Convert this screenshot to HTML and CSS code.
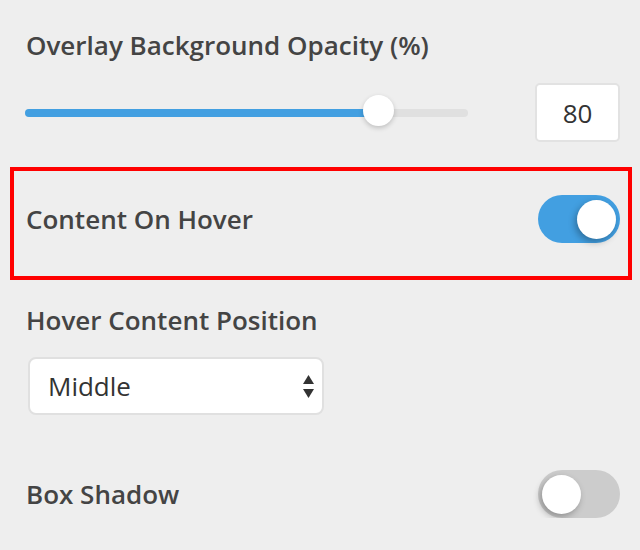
FILE: index.html
```html
<!DOCTYPE html>
<html lang="en">
<head>
    <meta charset="UTF-8">
    <meta name="viewport" content="width=device-width, initial-scale=1.0">
    <title>Overlay Settings</title>
    <link rel="stylesheet" href="styles.css">
</head>
<body>

    <!-- Opacity slider -->
    <div class="field">
        <div class="label">Overlay Background Opacity (%)</div>
        <div class="slider-row">
            <div class="track">
                <div class="fill" style="width: 80%;"></div>
                <div class="thumb"></div>
            </div>
            <input class="number" type="text" value="80">
        </div>
    </div>

    <!-- Content on hover (highlighted) -->
    <div class="highlight">
        <div class="toggle-row">
            <div class="label">Content On Hover</div>
            <div class="toggle on"><span class="knob"></span></div>
        </div>
    </div>

    <!-- Hover position -->
    <div class="field field-select">
        <div class="label">Hover Content Position</div>
        <div class="select">
            <span>Middle</span>
            <svg width="11" height="23" viewBox="0 0 11 23">
                <polygon points="0,9 5.5,0 11,9" fill="#333"/>
                <polygon points="0,14 11,14 5.5,23" fill="#333"/>
            </svg>
        </div>
    </div>

    <!-- Box shadow -->
    <div class="field field-shadow">
        <div class="toggle-row">
            <div class="label">Box Shadow</div>
            <div class="toggle"><span class="knob"></span></div>
        </div>
    </div>

</body>
</html>
```

FILE: styles.css
```css
body {
    margin: 0;
    padding-top: 27px;
    background-color: #eeeeee;
    font-family: "Open Sans", "DejaVu Sans", sans-serif;
    color: #444;
}

.field {
    padding: 0 20px 0 26px;
}

.label {
    font-size: 26px;
    font-weight: 600;
    line-height: 36px;
}

/* slider */
.slider-row {
    display: flex;
    align-items: center;
    justify-content: space-between;
    height: 59px;
    margin-top: 20px;
    margin-left: -1px;
}

.track {
    display: flex;
    align-items: center;
    width: 443px;
    height: 8px;
    border-radius: 4px;
    background: #e0e0e0;
}

.fill {
    height: 8px;
    border-radius: 4px;
    background: #429fe1;
}

.thumb {
    flex-shrink: 0;
    width: 31px;
    height: 31px;
    margin-left: -16px;
    margin-bottom: 5px;
    border-radius: 50%;
    background: white;
    box-shadow: 0px 2px 5px rgba(0, 0, 0, 0.2);
}

.number {
    box-sizing: border-box;
    width: 85px;
    height: 59px;
    margin: 0;
    padding: 0;
    border: 2px solid #e2e2e2;
    border-radius: 5px;
    background: white;
    font-family: "Open Sans", sans-serif;
    font-size: 26px;
    color: #333;
    text-align: center;
}

/* highlighted row */
.highlight {
    margin: 25px 8px 0 10px;
    padding: 24px 8px 33px 12px;
    border: 4px solid #ff0000;
}

.toggle-row {
    display: flex;
    align-items: center;
    justify-content: space-between;
    height: 48px;
}

.toggle {
    box-sizing: border-box;
    display: flex;
    align-items: center;
    width: 82px;
    height: 48px;
    padding: 4px;
    border-radius: 24px;
    background: #cccccc;
}

.toggle.on {
    justify-content: flex-end;
    background: #429fe1;
}

.knob {
    width: 39px;
    height: 39px;
    border-radius: 50%;
    background: white;
    box-shadow: -2px 3px 7px rgba(0, 0, 0, 0.3);
}

/* select */
.field-select {
    margin-top: 22px;
}

.select {
    box-sizing: border-box;
    display: flex;
    align-items: center;
    justify-content: space-between;
    width: 296px;
    height: 58px;
    margin: 19px 0 0 2px;
    padding: 0 8px 0 18px;
    border: 2px solid #e0e0e0;
    border-radius: 8px;
    background: white;
    font-size: 26px;
    color: #333;
}

.field-shadow {
    margin-top: 55px;
}
```
